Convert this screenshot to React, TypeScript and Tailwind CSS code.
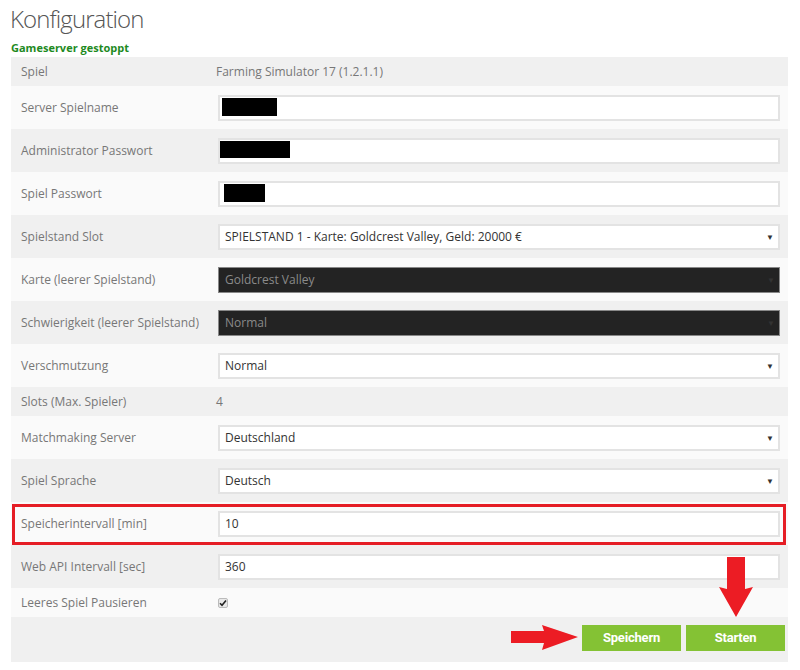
import React from "react";

type Kind = "text" | "input" | "select" | "dark" | "check" | "secret";

interface Row {
    label: string;
    kind: Kind;
    value?: string;
    redact?: { left: number; width: number; height: number };
    marked?: boolean;
}

const ROWS: Row[] = [
    { label: "Spiel", kind: "text", value: "Farming Simulator 17 (1.2.1.1)" },
    { label: "Server Spielname", kind: "secret", redact: { left: 2, width: 55, height: 18 } },
    { label: "Administrator Passwort", kind: "secret", redact: { left: 0, width: 70, height: 17 } },
    { label: "Spiel Passwort", kind: "secret", redact: { left: 4, width: 41, height: 18 } },
    { label: "Spielstand Slot", kind: "select", value: "SPIELSTAND 1 - Karte: Goldcrest Valley, Geld: 20000 €" },
    { label: "Karte (leerer Spielstand)", kind: "dark", value: "Goldcrest Valley" },
    { label: "Schwierigkeit (leerer Spielstand)", kind: "dark", value: "Normal" },
    { label: "Verschmutzung", kind: "select", value: "Normal" },
    { label: "Slots (Max. Spieler)", kind: "text", value: "4" },
    { label: "Matchmaking Server", kind: "select", value: "Deutschland" },
    { label: "Spiel Sprache", kind: "select", value: "Deutsch" },
    { label: "Speicherintervall [min]", kind: "input", value: "10", marked: true },
    { label: "Web API Intervall [sec]", kind: "input", value: "360" },
    { label: "Leeres Spiel Pausieren", kind: "check" },
];

const BTN_FONT = '"Liberation Sans Narrow", "Roboto", sans-serif';

function Field({ row }: { row: Row }) {
    switch (row.kind) {
        case "text":
            return <span className="-ml-[2px] text-[#777]">{row.value}</span>;
        case "secret":
            return (
                <div className="relative h-[26px] w-full border-2 border-[#e3e3e3] bg-white">
                    <div
                        className="absolute top-[1px] bg-black"
                        style={{ left: row.redact!.left, width: row.redact!.width, height: row.redact!.height }}
                    />
                </div>
            );
        case "input":
            return (
                <div className="flex h-[26px] w-full items-center border-2 border-[#e3e3e3] bg-white pl-[5px] text-[#333]">
                    {row.value}
                </div>
            );
        case "select":
            return (
                <div className="flex h-[26px] w-full items-center justify-between border-2 border-[#e3e3e3] bg-white pl-[5px] pr-[4px] text-[#333]">
                    <span>{row.value}</span>
                    <span className="text-[8px] text-[#333]">▼</span>
                </div>
            );
        case "dark":
            return (
                <div className="flex h-[26px] w-full items-center justify-between border border-[#888] bg-[#232323] pl-[6px] pr-[4px] text-[#8a8a8a]">
                    <span>{row.value}</span>
                    <span className="text-[8px] text-[#333]">▼</span>
                </div>
            );
        case "check":
            return (
                <div className="flex h-[10px] w-[10px] items-center justify-center rounded-[2px] border border-[#bbb] bg-[#e8e8e8]">
                    <svg width="8" height="8" viewBox="0 0 8 8">
                        <path d="M1 4.2 L3 6.2 L7 1.5" fill="none" stroke="#222" strokeWidth="1.6" />
                    </svg>
                </div>
            );
    }
}

export default function App() {
    return (
        <div
            className="relative h-[670px] w-[800px] bg-white"
            style={{ fontFamily: '"Open Sans", "Noto Sans", sans-serif' }}
        >
            <div className="pl-[11px] pr-[12px]">
                <h1 className="h-[39px] -ml-[1px] pt-[4px] text-[24px] leading-[30px] font-light text-[#555] tracking-[-0.9px]">
                    Konfiguration
                </h1>
                <p className="h-[18px] text-[11px] leading-[18px] font-bold text-[#1e8a1e]">
                    Gameserver gestoppt
                </p>

                {/* Config table */}
                <div className="flex flex-col text-[12px]">
                    {ROWS.map((row, i) => {
                        const tall = row.kind !== "text" && row.kind !== "check";
                        return (
                            <div
                                key={row.label}
                                className={`relative grid grid-cols-[207px_1fr] items-center ${
                                    tall ? "h-[43px]" : "h-[29px]"
                                } ${i % 2 === 0 ? "bg-[#f0f0f0]" : "bg-[#fafafa]"}`}
                            >
                                <span className="pl-[10px] text-[#777]">{row.label}</span>
                                <div className="pr-[8px]">
                                    <Field row={row} />
                                </div>
                                {row.marked && (
                                    <div className="pointer-events-none absolute left-[1px] right-[2px] top-[2px] bottom-0 border-[3px] border-[#e51d25]" />
                                )}
                            </div>
                        );
                    })}
                    <div className="flex h-[45px] items-start justify-end gap-[5px] bg-[#f0f0f0] pt-[8px] pr-[3px]">
                        <button
                            type="button"
                            className="h-[26px] w-[99px] bg-[#84c234] text-[13px] font-bold tracking-[-0.2px] text-white"
                            style={{ fontFamily: BTN_FONT }}
                        >
                            Speichern
                        </button>
                        <button
                            type="button"
                            className="h-[26px] w-[99px] bg-[#84c234] text-[13px] font-bold tracking-[-0.2px] text-white"
                            style={{ fontFamily: BTN_FONT }}
                        >
                            Starten
                        </button>
                    </div>
                </div>
            </div>

            {/* Annotation arrows */}
            <svg className="absolute left-[508px] top-[622px]" width="72" height="30" viewBox="0 0 72 30">
                <path d="M3 9 L36 9 L34 3 L70 15 L34 28 L36 21 L3 21 Z" fill="#ec1c24" />
            </svg>
            <svg className="absolute left-[717px] top-[555px]" width="38" height="64" viewBox="0 0 38 64">
                <path d="M10 2 L28 2 L28 34 L36 32 L19 62 L2 32 L10 34 Z" fill="#ec1c24" />
            </svg>
        </div>
    );
}
